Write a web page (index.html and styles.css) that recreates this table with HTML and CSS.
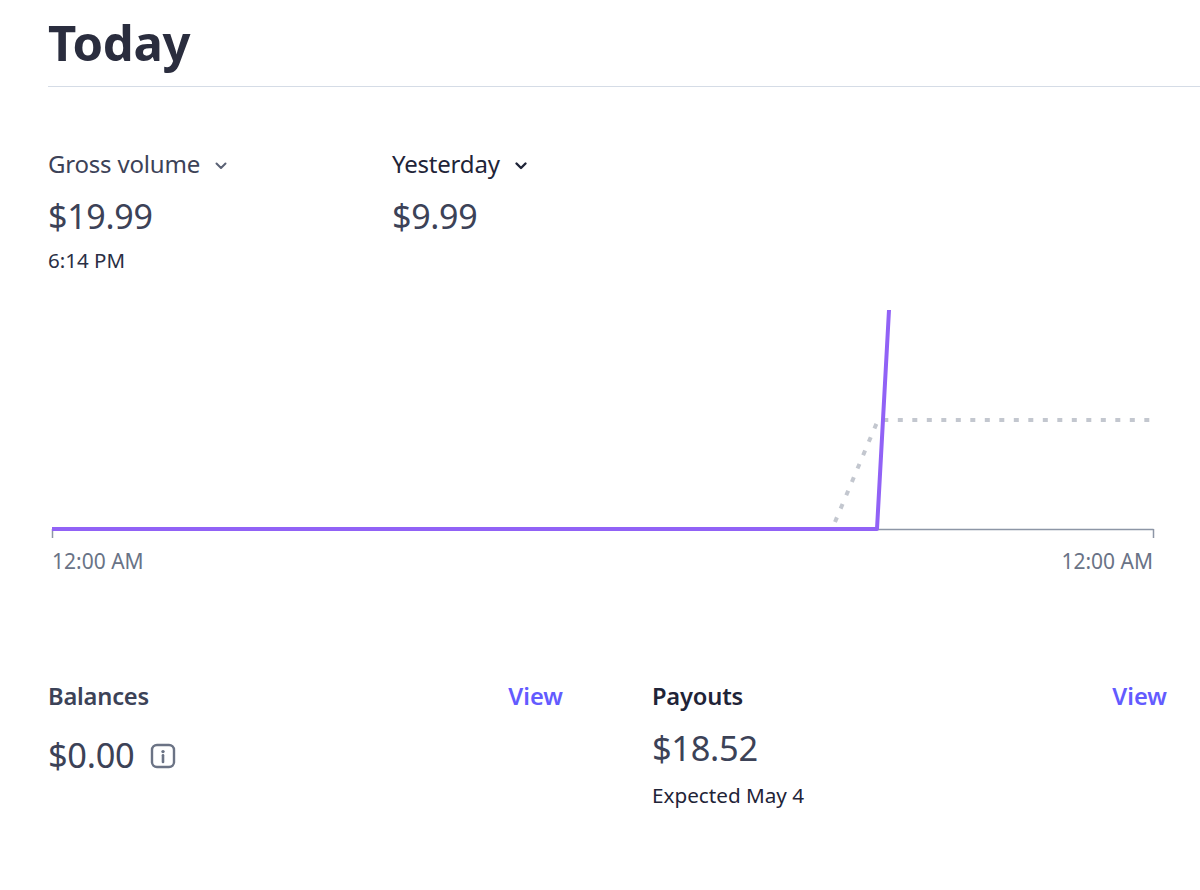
FILE: index.html
```html
<!DOCTYPE html>
<html>
<head>
<meta charset="utf-8">
<link rel="stylesheet" href="styles.css">
</head>
<body>
<div class="page">
  <header class="head">
    <h1 class="title">Today</h1>
  </header>

  <section class="metrics">
    <div class="metric metric-main">
      <div class="metric-label">Gross volume
        <svg class="chev chev-gray" width="14" height="9" viewBox="0 0 14 9"><path d="M2.5 2.5l4.5 4.5 4.5-4.5" fill="none" stroke="currentColor" stroke-width="2" stroke-linecap="round" stroke-linejoin="round"/></svg>
      </div>
      <div class="metric-value">$19.99</div>
      <div class="metric-time">6:14 PM</div>
    </div>
    <div class="metric metric-compare">
      <div class="metric-label dark">Yesterday
        <svg class="chev chev-dark" width="14" height="9" viewBox="0 0 14 9"><path d="M2.5 2.5l4.5 4.5 4.5-4.5" fill="none" stroke="currentColor" stroke-width="2.4" stroke-linecap="round" stroke-linejoin="round"/></svg>
      </div>
      <div class="metric-value">$9.99</div>
    </div>
  </section>

  <section class="chart">
    <svg class="chart-svg" width="1110" height="240" viewBox="0 0 1110 240">
      <path d="M4.5 229.5H1105.5" stroke="#8d96a6" stroke-width="1.5" fill="none"/>
      <path d="M4.5 229V238" stroke="#8d96a6" stroke-width="1.5" fill="none"/>
      <path d="M1105.5 229V238" stroke="#8d96a6" stroke-width="1.5" fill="none"/>
      <path d="M787 222L830 120H1104" stroke="#c3c7cf" stroke-width="4" stroke-dasharray="5 9.5" fill="none"/>
      <path d="M4 229H829L841 10" stroke="#9162f6" stroke-width="4" fill="none" stroke-linejoin="round"/>
    </svg>
    <div class="axis">
      <span>12:00 AM</span>
      <span>12:00 AM</span>
    </div>
  </section>

  <section class="cards">
    <div class="card">
      <div class="card-head">
        <span class="card-title">Balances</span>
        <a class="card-link">View</a>
      </div>
      <div class="card-value">$0.00
        <svg class="info" width="26" height="26" viewBox="0 0 26 26"><rect x="2" y="2" width="22" height="22" rx="5" fill="none" stroke="#6b7385" stroke-width="2.4"/><circle cx="13" cy="8.6" r="1.7" fill="#6b7385"/><path d="M13 12.2v6.8" stroke="#6b7385" stroke-width="2.6" stroke-linecap="round"/></svg>
      </div>
    </div>
    <div class="card">
      <div class="card-head">
        <span class="card-title dark">Payouts</span>
        <a class="card-link">View</a>
      </div>
      <div class="card-value payout">$18.52</div>
      <div class="card-sub">Expected May 4</div>
    </div>
  </section>
</div>
</body>
</html>
```

FILE: styles.css
```css
* { box-sizing: border-box; }
html, body { margin: 0; padding: 0; background: #ffffff; }
body {
  font-family: "Noto Sans", "Open Sans", "Liberation Sans", sans-serif;
  color: #3c4257;
}
.page {
  padding-left: 48px;
  width: 1200px;
  height: 890px;
  overflow: hidden;
}
.head {
  border-bottom: 1.5px solid #d5dce6;
  height: 87px;
}
.title {
  margin: 0;
  padding-top: 9px;
  font-size: 49px;
  line-height: 66px;
  font-weight: 700;
  color: #2a2d3e;
  letter-spacing: -0.3px;
}
.metrics {
  display: flex;
  padding-top: 62px;
  height: 213px;
}
.metric-main { width: 344px; }
.metric-label {
  display: flex;
  align-items: center;
  gap: 14px;
  font-size: 24px;
  line-height: 30px;
  color: #3c4257;
  letter-spacing: -0.2px;
}
.metric-label.dark { color: #1f2438; }
.chev-gray { color: #5b6275; margin-top: 2px; }
.chev-dark { color: #1f2438; margin-top: 2px; }
.metric-value {
  margin-top: 17px;
  font-size: 34px;
  line-height: 40px;
  color: #3c4257;
  letter-spacing: -0.3px;
}
.metric-time {
  margin-top: 12px;
  font-size: 20.5px;
  line-height: 24px;
  color: #2a2f45;
}
.chart { width: 1110px; }
.chart-svg { display: block; }
.axis {
  display: flex;
  justify-content: space-between;
  padding-left: 4px;
  margin-top: 9px;
  width: 1105px;
  font-size: 21px;
  line-height: 24px;
  color: #697386;
}
.cards {
  display: grid;
  grid-template-columns: 515px 515px;
  column-gap: 89px;
  padding-top: 108px;
}
.card-head {
  display: flex;
  justify-content: space-between;
  align-items: center;
  font-size: 23.7px;
  line-height: 30px;
}
.card-title { font-weight: 600; color: #3c4257; letter-spacing: -0.2px; }
.card-title.dark { color: #1f2438; }
.card-link { font-weight: 600; color: #635bff; cursor: pointer; }
.card-value {
  display: flex;
  align-items: center;
  gap: 16px;
  margin-top: 24px;
  font-size: 34.4px;
  line-height: 40px;
  color: #3c4257;
  letter-spacing: -0.3px;
}
.card-value.payout { margin-top: 17px; }
.info { margin-top: 2px; }
.card-sub {
  margin-top: 15px;
  font-size: 20.7px;
  line-height: 24px;
  color: #1f2438;
}
```
